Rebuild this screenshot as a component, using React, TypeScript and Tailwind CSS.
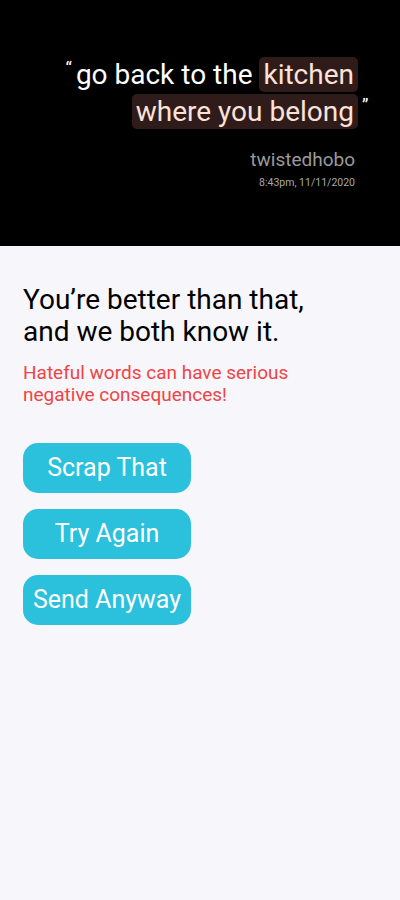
const FONT = { fontFamily: "Roboto, 'Noto Sans', sans-serif" };

function Mark({ children }: { children: React.ReactNode }) {
  return (
    <span className="rounded-[5px] bg-[#2f1c1a] px-[4px] py-[1px] text-[#fde2d8]">{children}</span>
  );
}

const ACTIONS = ["Scrap That", "Try Again", "Send Anyway"];

export default function App() {
  return (
    <div style={FONT} className="flex min-h-[900px] w-[400px] flex-col bg-[#f7f6fb]">
      <div className="flex h-[246px] flex-col items-end bg-black pr-[26px] pt-[58px]">
        <div className="flex flex-col items-end text-[28px] leading-[34px] text-white">
          <div>
            <span className="relative top-[-9px] mr-[4px] text-[18px]">“</span>
            go back to the <Mark>kitchen</Mark>
            <span className="inline-block w-[16px]" />
          </div>
          <div>
            <Mark>where you belong</Mark>
            <span className="relative top-[-9px] inline-block w-[16px] pl-[4px] text-[18px]">”</span>
          </div>
        </div>
        <div className="mr-[19px] mt-[17px] text-[19px] leading-[22px] text-[#9a9a9a]">twistedhobo</div>
        <div className="mr-[19px] mt-[5px] text-[10.5px] leading-[14px] text-[#a8a8a8]">8:43pm, 11/11/2020</div>
      </div>

      <div className="flex flex-col px-[23px] pt-[38px]">
        <h1 className="text-[28px] leading-[32px] text-black">
          You’re better than that,
          <br />
          and we both know it.
        </h1>
        <p className="mt-[14px] text-[19px] leading-[22px] text-[#ef4444]">
          Hateful words can have serious
          <br />
          negative consequences!
        </p>
        <div className="mt-[37px] flex flex-col gap-[16px]">
          {ACTIONS.map((a) => (
            <button
              key={a}
              className="flex h-[50px] w-[168px] items-center justify-center rounded-[15px] bg-[#2bc0dc] text-[25px] text-white"
            >
              {a}
            </button>
          ))}
        </div>
      </div>
    </div>
  );
}
